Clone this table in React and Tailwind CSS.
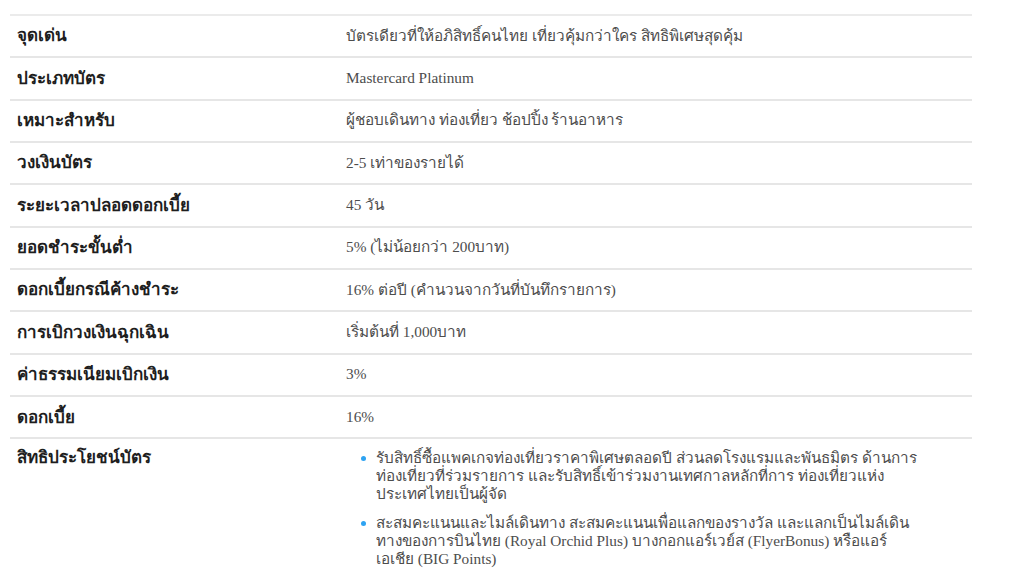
// ตารางสรุปข้อมูลบัตรเครดิต
const rows = [
  { label: "จุดเด่น", value: "บัตรเดียวที่ให้อภิสิทธิ์คนไทย เที่ยวคุ้มกว่าใคร สิทธิพิเศษสุดคุ้ม" },
  { label: "ประเภทบัตร", value: "Mastercard Platinum" },
  { label: "เหมาะสำหรับ", value: "ผู้ชอบเดินทาง ท่องเที่ยว ช้อปปิ้ง ร้านอาหาร" },
  { label: "วงเงินบัตร", value: "2-5 เท่าของรายได้" },
  { label: "ระยะเวลาปลอดดอกเบี้ย", value: "45 วัน" },
  { label: "ยอดชำระขั้นต่ำ", value: "5% (ไม่น้อยกว่า 200บาท)" },
  { label: "ดอกเบี้ยกรณีค้างชำระ", value: "16% ต่อปี (คำนวนจากวันที่บันทึกรายการ)" },
  { label: "การเบิกวงเงินฉุกเฉิน", value: "เริ่มต้นที่ 1,000บาท" },
  { label: "ค่าธรรมเนียมเบิกเงิน", value: "3%" },
  { label: "ดอกเบี้ย", value: "16%" },
];

const benefits = [
  ["รับสิทธิ์ซื้อแพคเกจท่องเที่ยวราคาพิเศษตลอดปี ส่วนลดโรงแรมและพันธมิตร ด้านการ", "ท่องเที่ยวที่ร่วมรายการ และรับสิทธิ์เข้าร่วมงานเทศกาลหลักที่การ ท่องเที่ยวแห่ง", "ประเทศไทยเป็นผู้จัด"],
  ["สะสมคะแนนและไมล์เดินทาง สะสมคะแนนเพื่อแลกของรางวัล และแลกเป็นไมล์เดิน", "ทางของการบินไทย (Royal Orchid Plus) บางกอกแอร์เวย์ส (FlyerBonus) หรือแอร์", "เอเชีย (BIG Points)"],
];

export default function App() {
  return (
    <div className="w-[1024px] h-[585px] bg-white overflow-hidden pt-[14px]">
      <div className="ml-[10px] w-[962px] border-t-2 border-[#ebebeb]">
        {rows.map((r) => (
          <div key={r.label} className="flex items-center h-[42.35px] border-b-2 border-[#e6e6e6]">
            <div className="w-[336px] pl-[7px] text-[17px] font-bold text-[#1e1e1e] font-['Liberation_Sans',sans-serif]">
              {r.label}
            </div>
            <div className="flex-1 text-[15.3px] text-[#4d4d4d] font-['Liberation_Serif',serif]">
              {r.value}
            </div>
          </div>
        ))}

        {/* สิทธิประโยชน์ */}
        <div className="flex pt-[10px]">
          <div className="w-[336px] pl-[7px] text-[17px] font-bold text-[#1e1e1e] font-['Liberation_Sans',sans-serif] leading-[18px]">
            สิทธิประโยชน์บัตร
          </div>
          <ul className="w-[620px] pl-[30px] flex flex-col gap-[11px]">
            {benefits.map((lines, i) => (
              <li key={i} className="relative text-[15.3px] leading-[18px] text-[#4d4d4d] font-['Liberation_Serif',serif] whitespace-nowrap">
                <span className="absolute -left-[15px] top-[7px] w-[5px] h-[5px] rounded-full bg-[#2ea3f2]" />
                {lines.map((l, j) => (
                  <div key={j}>{l}</div>
                ))}
              </li>
            ))}
          </ul>
        </div>
      </div>
    </div>
  );
}
